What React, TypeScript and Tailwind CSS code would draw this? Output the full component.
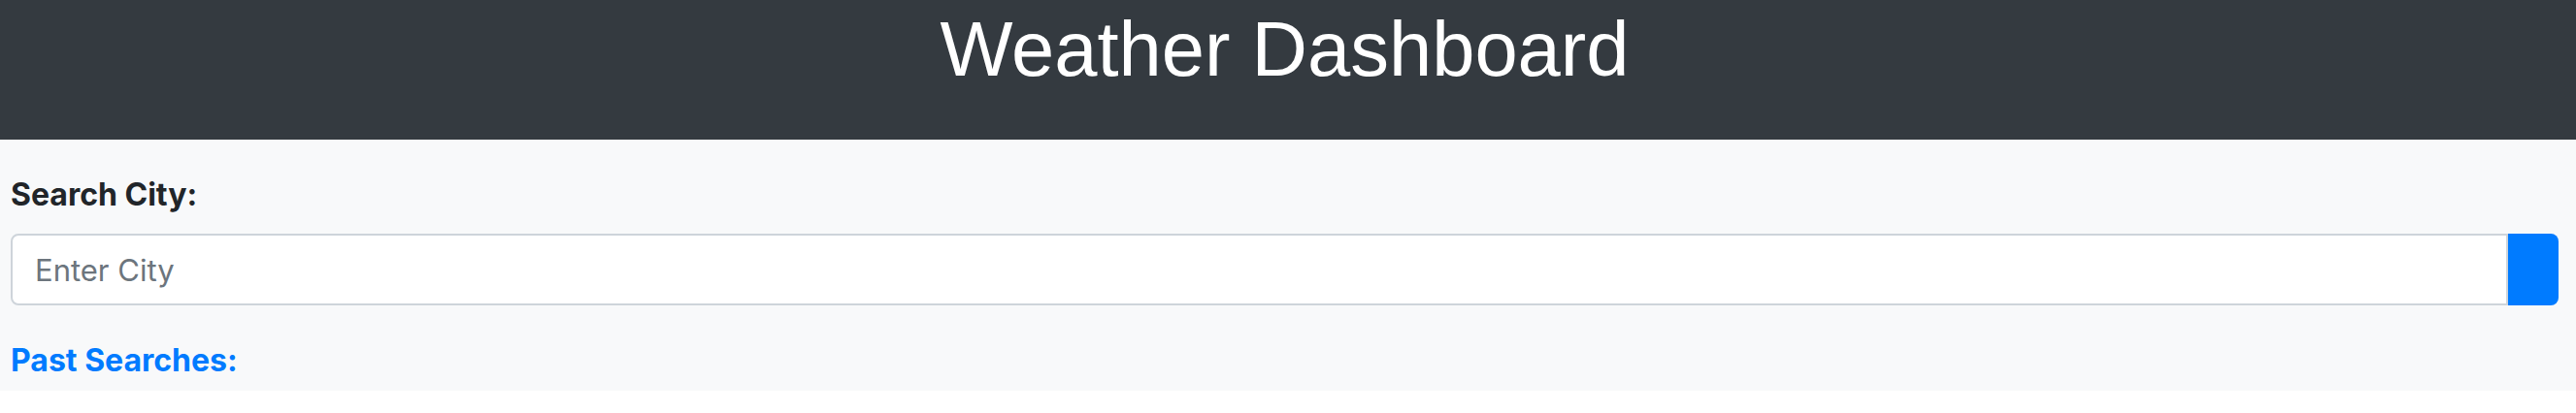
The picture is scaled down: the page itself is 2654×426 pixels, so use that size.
import React from "react";

export default function App() {
  return (
    <div className="w-full">
      <header className="bg-[#343a40] h-[144px] pt-[11px] pr-[7px] text-center">
        <h1
          className="text-white text-[79.5px] leading-[80px] font-normal"
          style={{ fontFamily: '"Liberation Sans", Arial, sans-serif' }}
        >
          Weather Dashboard
        </h1>
      </header>
      <main
        className="bg-[#f8f9fa] pl-[11px] pr-[18px] pt-[37px] pb-[11px]"
        style={{ fontFamily: 'Inter, "Noto Sans", sans-serif' }}
      >
        <label className="block text-[32px] leading-[40px] font-bold text-[#212529]">
          Search City:
        </label>
        <div className="mt-[20px] flex h-[74px]">
          <input
            type="text"
            placeholder="Enter City"
            className="flex-1 min-w-0 h-full bg-white border-2 border-[#ced4da] rounded-l-[8px] pl-[23px] text-[31px] text-[#495057] placeholder:text-[#6c757d] outline-none"
          />
          <button className="w-[52px] h-full bg-[#007bff] rounded-r-[8px]" aria-label="search" />
        </div>
        <h2 className="mt-[37px] text-[32px] leading-[40px] font-bold text-[#007bff]">
          Past Searches:
        </h2>
      </main>
    </div>
  );
}
